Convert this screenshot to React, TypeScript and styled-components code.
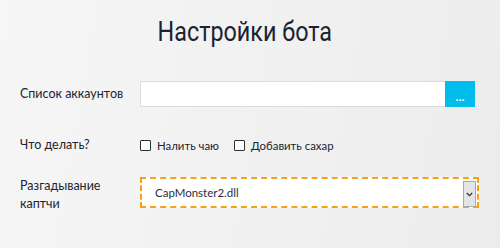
import React from 'react'
import styled, { createGlobalStyle } from 'styled-components'

const Global = createGlobalStyle`
  html, body { margin: 0; padding: 0; }
  body {
    width: 500px; height: 248px; overflow: hidden;
    background: linear-gradient(100deg, #f6f6f6 0%, #f1f1f2 50%, #ececed 100%);
    font-family: Lato, "Noto Sans", sans-serif;
    color: #1f2530;
  }
`

const Page = styled.div`
  width: 500px;
  height: 248px;
  box-sizing: border-box;
  padding: 14px 20px 0;
`

const TitleRow = styled.div`
  display: flex;
  justify-content: center;
  padding-right: 10px;
  margin-bottom: 31px;
`

const Title = styled.h1`
  margin: 0;
  font-family: Roboto, "Noto Sans", sans-serif;
  font-weight: 400;
  font-size: 27px;
  line-height: 36px;
  color: #1b2230;
  transform: scaleX(0.865);
`

const Row = styled.div<{ $mb: number; $top?: boolean }>`
  display: flex;
  align-items: ${({ $top }) => ($top ? 'flex-start' : 'center')};
  margin-bottom: ${({ $mb }) => $mb}px;
`

const Label = styled.div<{ $wrap?: boolean }>`
  width: 110px;
  margin-right: 10px;
  font-size: 12.5px;
  line-height: 18px;
  color: #1c2331;
  white-space: ${({ $wrap }) => ($wrap ? 'normal' : 'nowrap')};
`

const Control = styled.div`
  display: flex;
  align-items: center;
  width: 339px;
  min-height: 18px;
`

const PathInput = styled.div`
  flex: 1;
  height: 26px;
  box-sizing: border-box;
  background: #fff;
  border: 1px solid #dcdcde;
  border-right: none;
`

const BrowseBtn = styled.button`
  width: 30px;
  height: 26px;
  border: none;
  padding: 0 0 4px;
  background: #00bdeb;
  color: #fff;
  font-family: "Liberation Sans", sans-serif;
  font-size: 11px;
  font-weight: 700;
  cursor: pointer;
  display: flex;
  align-items: end;
  justify-content: center;
  margin-right: 4px;
`

const Check = styled.label`
  display: flex;
  align-items: center;
  gap: 6px;
  font-size: 11.4px;
  color: #1c2331;
  margin-right: 15px;
`

const Box = styled.span`
  width: 11px;
  height: 11px;
  box-sizing: border-box;
  border: 1px solid #2a2f38;
  background: #fff;
  border-radius: 1px;
`

const Select = styled.div`
  position: relative;
  flex: 1;
  height: 31px;
  box-sizing: border-box;
  background: #fff;
  border: 2px dashed #f7a11a;
  display: flex;
  align-items: center;
  padding-left: 13px;
  font-size: 11.5px;
  color: #2a303b;
`

const Arrow = styled.span`
  position: absolute;
  right: 1px;
  top: 2px;
  width: 13px;
  height: 26px;
  box-sizing: border-box;
  background: #e4e4e6;
  border: 1px solid #a9a9ab;
  display: flex;
  align-items: center;
  justify-content: center;
`

export default function App() {
  return (
    <Page>
      <Global />
      <TitleRow>
        <Title>Настройки бота</Title>
      </TitleRow>

      <Row $mb={29}>
        <Label>Список аккаунтов</Label>
        <Control>
          <PathInput />
          <BrowseBtn>...</BrowseBtn>
        </Control>
      </Row>

      <Row $mb={23}>
        <Label>Что делать?</Label>
        <Control>
          <Check><Box />Налить чаю</Check>
          <Check><Box />Добавить сахар</Check>
        </Control>
      </Row>

      <Row $mb={0} $top>
        <Label $wrap>Разгадывание каптчи</Label>
        <Control>
          <Select>
            CapMonster2.dll
            <Arrow>
              <svg width="7" height="5" viewBox="0 0 7 5">
                <path d="M0.8 1 L3.5 3.7 L6.2 1" fill="none" stroke="#333" strokeWidth="1.2" />
              </svg>
            </Arrow>
          </Select>
        </Control>
      </Row>
    </Page>
  )
}
